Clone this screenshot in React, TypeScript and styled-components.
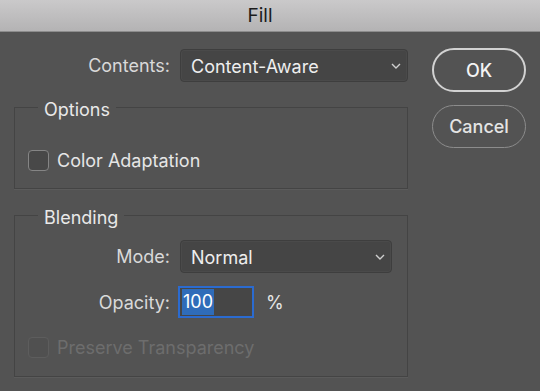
import React from "react";
import styled, { createGlobalStyle } from "styled-components";

const GlobalStyle = createGlobalStyle`
  html, body {
    margin: 0;
    padding: 0;
    background: #535353;
  }
  body {
    font-family: Inter, "Liberation Sans", "Noto Sans", sans-serif;
    -webkit-font-smoothing: antialiased;
  }
`;

const Window = styled.div`
  width: 540px;
  height: 391px;
  background: #535353;
  overflow: hidden;
  display: flex;
  flex-direction: column;
`;

const TitleBar = styled.div`
  flex: none;
  height: 31px;
  display: flex;
  align-items: center;
  justify-content: center;
  padding-right: 20px;
  background: linear-gradient(#cac9ca, #b4b3b4);
  border-bottom: 1px solid #8c8c8c;
  color: #1b1b1b;
  font-size: 19px;
`;

const Body = styled.div`
  display: flex;
  padding: 16px 14px 0 14px;
`;

const Main = styled.div`
  width: 394px;
  padding-top: 1px;
`;

const Side = styled.div`
  margin-left: 24px;
  width: 94px;
  display: flex;
  flex-direction: column;
  gap: 13px;
`;

const Row = styled.div<{ $label: number }>`
  display: grid;
  grid-template-columns: ${(p) => p.$label}px auto 1fr;
  column-gap: 10px;
  align-items: center;
`;

const Label = styled.label`
  text-align: right;
  color: #d9d9d9;
  font-size: 18px;
`;

const Select = styled.div<{ $width: number }>`
  width: ${(p) => p.$width}px;
  height: 33px;
  box-sizing: border-box;
  display: flex;
  align-items: center;
  justify-content: space-between;
  padding: 1px 6px 0 10px;
  background: #454545;
  border: 1px solid #3e3e3e;
  border-radius: 4px;
  box-shadow: inset 0 0 0 1px rgba(255, 255, 255, 0.03);
  color: #eeeeee;
  font-size: 18px;
`;

const Group = styled.fieldset<{ $top: number }>`
  margin: ${(p) => p.$top}px 0 0 0;
  padding: 0;
  min-inline-size: 0;
  border: 1px solid #444444;
  box-shadow: 0 1px 0 rgba(255, 255, 255, 0.05);
`;

const Legend = styled.legend`
  margin-left: 23px;
  padding: 6px 6px 0 6px;
  line-height: 20px;
  color: #e9e9e9;
  font-size: 18px;
`;

const GroupBody = styled.div<{ $pad: string }>`
  padding: ${(p) => p.$pad};
  display: flex;
  flex-direction: column;
`;

const CheckRow = styled.label<{ $disabled?: boolean }>`
  display: flex;
  align-items: center;
  gap: 8px;
  height: 21px;
  padding-left: 13px;
  color: ${(p) => (p.$disabled ? "#6d6d6d" : "#e6e6e6")};
  font-size: 18px;
`;

const Box = styled.span<{ $disabled?: boolean }>`
  width: 21px;
  height: 21px;
  box-sizing: border-box;
  border-radius: 4px;
  border: 1.5px solid ${(p) => (p.$disabled ? "#5d5d5d" : "#858585")};
  background: ${(p) => (p.$disabled ? "#505050" : "#484848")};
`;

const NumberField = styled.div`
  width: 72px;
  height: 28px;
  box-sizing: border-box;
  display: flex;
  align-items: center;
  padding-left: 2px;
  background: #464646;
  outline: 2px solid #2b6bd0;
  color: #ffffff;
  font-size: 18px;
`;

const Selected = styled.span`
  background: #2f6cb9;
  line-height: 26px;
  padding: 0 1px;
`;

const Unit = styled.span`
  margin-left: 4px;
  color: #e6e6e6;
  font-size: 18px;
`;

const Button = styled.button<{ $primary?: boolean }>`
  height: ${(p) => (p.$primary ? 44 : 43)}px;
  width: 94px;
  border-radius: 22px;
  background: transparent;
  border: ${(p) => (p.$primary ? "2px solid #d2d2d2" : "1.5px solid #8c8c8c")};
  color: ${(p) => (p.$primary ? "#f4f4f4" : "#e4e4e4")};
  font-family: inherit;
  font-size: 18px;
  font-weight: 500;
`;

const Chevron = () => (
  <svg width="10" height="6" viewBox="0 0 10 6">
    <polyline points="1,1 5,5 9,1" fill="none" stroke="#cfcfcf" strokeWidth="1.4" />
  </svg>
);

export default function App() {
  return (
    <Window>
      <GlobalStyle />
      <TitleBar>Fill</TitleBar>
      <Body>
        <Main>
          <Row $label={156}>
            <Label>Contents:</Label>
            <Select $width={228}>
              Content-Aware
              <Chevron />
            </Select>
          </Row>

          <Group $top={12}>
            <Legend>Options</Legend>
            <GroupBody $pad="30px 0 17px 0">
              <CheckRow>
                <Box />
                Color Adaptation
              </CheckRow>
            </GroupBody>
          </Group>

          <Group $top={13}>
            <Legend>Blending</Legend>
            <GroupBody $pad="12px 0 18px 0">
              <Row $label={155}>
                <Label>Mode:</Label>
                <Select $width={212}>
                  Normal
                  <Chevron />
                </Select>
              </Row>
              <Row $label={155} style={{ marginTop: 15 }}>
                <Label>Opacity:</Label>
                <NumberField>
                  <Selected>100</Selected>
                </NumberField>
                <Unit>%</Unit>
              </Row>
              <CheckRow $disabled style={{ marginTop: 21 }}>
                <Box $disabled />
                Preserve Transparency
              </CheckRow>
            </GroupBody>
          </Group>
        </Main>
        <Side>
          <Button $primary>OK</Button>
          <Button>Cancel</Button>
        </Side>
      </Body>
    </Window>
  );
}
